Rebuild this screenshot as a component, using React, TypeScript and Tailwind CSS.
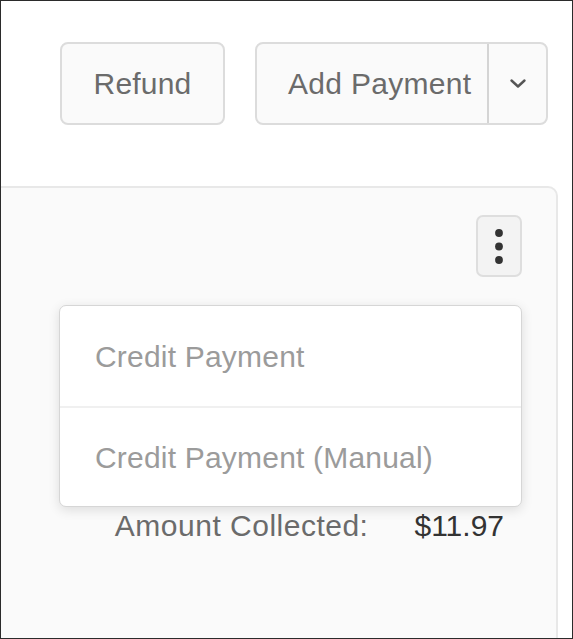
import React from 'react';

const MENU_ITEMS: string[] = ['Credit Payment', 'Credit Payment (Manual)'];

const KebabIcon = () => (
  <svg width="10" height="36" viewBox="0 0 10 36" fill="#333333">
    <circle cx="5" cy="4" r="3.9" />
    <circle cx="5" cy="17.5" r="3.9" />
    <circle cx="5" cy="31" r="3.9" />
  </svg>
);

const ChevronDown = () => (
  <svg width="18" height="11" viewBox="0 0 18 11" fill="none">
    <path d="M2.5 2.5 L9 8.5 L15.5 2.5" stroke="#555555" strokeWidth="2.4" strokeLinecap="round" strokeLinejoin="round" />
  </svg>
);

export default function App() {
  return (
    <div className="w-[573px] h-[639px] overflow-hidden border border-[#2b2b2b] bg-white font-['Liberation_Sans',Arial,sans-serif]">
      {/* action buttons */}
      <div className="flex justify-end gap-[30px] pr-[24px] pt-[41px]">
        <button className="flex h-[83px] w-[165px] items-center justify-center rounded-[8px] border-2 border-[#dcdcdc] bg-[#fafafa] text-[30px] tracking-[0.2px] text-[#6b6b6b]">
          Refund
        </button>
        <div className="flex h-[83px] w-[293px] rounded-[8px] border-2 border-[#dcdcdc] bg-[#fafafa]">
          <button className="flex flex-1 items-center pl-[31px] text-[30px] tracking-[0.3px] text-[#6b6b6b]">
            Add Payment
          </button>
          <div className="w-[2px] bg-[#d4d4d4]" />
          <button className="flex w-[57px] items-center justify-center">
            <ChevronDown />
          </button>
        </div>
      </div>

      {/* payment card */}
      <div className="relative -ml-4 mr-[14px] mt-[61px] h-[500px] rounded-[10px] border-2 border-[#e8e8e8] bg-[#fafafa]">
        <div className="flex justify-end pr-[34px] pt-[27px]">
          <button className="flex h-[62px] w-[46px] items-center justify-center rounded-[7px] border-2 border-[#dedede] bg-[#f3f3f3] pt-[2px]">
            <KebabIcon />
          </button>
        </div>

        <div className="mt-[231px] flex justify-end gap-[46px] pr-[52px] text-[30px] leading-[36px]">
          <span className="tracking-[0.5px] text-[#6b6b6b]">Amount Collected:</span>
          <span className="text-[#333333]">$11.97</span>
        </div>

        {/* dropdown menu */}
        <div className="absolute right-[34px] top-[117px] w-[463px] rounded-[7px] border border-[#d6d6d6] bg-white shadow-[0_3px_12px_rgba(0,0,0,0.12)]">
          {MENU_ITEMS.map((item, idx) => (
            <div
              key={item}
              className={`flex h-[100px] items-center pl-[35px] text-[30px] tracking-[0.2px] text-[#9b9b9b] ${idx > 0 ? 'border-t-2 border-[#f0f0f0]' : ''}`}
            >
              {item}
            </div>
          ))}
        </div>
      </div>
    </div>
  );
}
